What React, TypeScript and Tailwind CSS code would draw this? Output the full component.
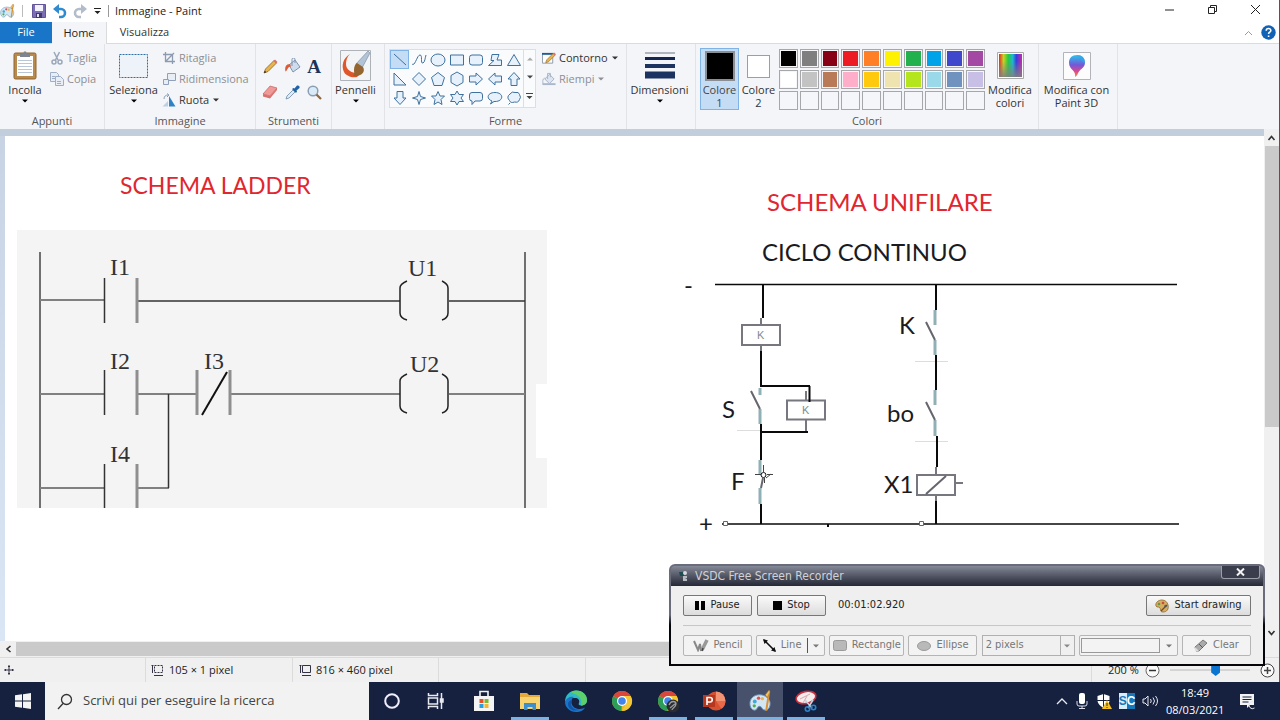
import type { ReactNode } from 'react';

const UI = "font-['Open_Sans','Noto_Sans',sans-serif]";

function Caret({ className = '' }: { className?: string }) {
  return (
    <svg width="6" height="4" viewBox="0 0 6 4" className={className} aria-hidden="true">
      <path d="M0 0.5h6L3 3.5z" fill="currentColor" />
    </svg>
  );
}

function PaletteIcon({ size }: { size: number }) {
  return (
    <svg width={size} height={size} viewBox="0 0 24 24" aria-hidden="true">
      <path d="M11 5C5 5 1 9 1 14c0 4 2 7 5 7 3 0 2-4 5-4s2 4 6 4c3 0 5-3 5-7 0-5-5-9-11-9z" fill="#d3e6f3" stroke="#6f9dbf" />
      <circle cx="6" cy="12" r="2" fill="#3fa9dd" />
      <circle cx="10" cy="8.500" r="1.800" fill="#e2504a" />
      <circle cx="5.500" cy="16.500" r="1.700" fill="#52ab52" />
      <circle cx="14" cy="9" r="1.700" fill="#f0b33c" />
      <path d="M20 1l2 1-1 7-2 13-2-1 2-13z" fill="#d99235" />
      <path d="M19 8l3-6-1-2-4 5z" fill="#f0c261" stroke="#a96a22" strokeWidth=".6" />
    </svg>
  );
}

/* ---------- title bar ---------- */

function TitleBar() {
  return (
    <header className="flex h-[22px] shrink-0 items-center bg-white text-[11px] text-[#222]">
      <div className="flex items-center gap-[7px]">
        <PaletteIcon size={15} />
        <span className="h-3 w-px bg-[#bbb]" />
      </div>
      <button aria-label="Salva" className="ml-[9px]">
        <svg width="14" height="14" viewBox="0 0 14 14">
          <path d="M.5.500h13v13H.500z" fill="#7d6db5" stroke="#63549a" />
          <path d="M3 1h8v6H3z" fill="#f3f1fa" />
          <path d="M4 9h6v5H4z" fill="#41386c" />
          <path d="M5 10h2v3H5z" fill="#e4e0f2" />
        </svg>
      </button>
      <button aria-label="Annulla" className="ml-[7px]">
        <svg width="14" height="15" viewBox="0 0 14 15">
          <path d="M2 5h6a4 4 0 010 8H6" fill="none" stroke="#2f8bd0" strokeWidth="2.600" />
          <path d="M0 5l6-5v10z" fill="#2f8bd0" />
        </svg>
      </button>
      <button aria-label="Ripeti" className="ml-[6px]">
        <svg width="14" height="15" viewBox="0 0 14 15">
          <path d="M12 5H6a4 4 0 000 8h2" fill="none" stroke="#b3bccb" strokeWidth="2.600" />
          <path d="M14 5L8 0v10z" fill="#b3bccb" />
        </svg>
      </button>
      <button aria-label="Personalizza barra" className="ml-[7px]">
        <svg width="7" height="7" viewBox="0 0 7 7">
          <path d="M0 0h7v1H0zM.500 3h6l-3 3z" fill="#222" />
        </svg>
      </button>
      <span className="ml-[7px] h-3 w-px bg-[#999]" />
      <h1 className="ml-[6px]">Immagine - Paint</h1>
      <div className="ml-auto flex items-center gap-8 pr-[18px] pb-[3px]">
        <button aria-label="Riduci a icona">
          <svg width="11" height="11" viewBox="0 0 11 11"><path d="M1 6h9" stroke="#222" /></svg>
        </button>
        <button aria-label="Ripristina">
          <svg width="11" height="11" viewBox="0 0 11 11">
            <path d="M1.500 3.500h6v6h-6zM3.500 3V1.500h6v6H8" fill="none" stroke="#222" />
          </svg>
        </button>
        <button aria-label="Chiudi">
          <svg width="11" height="11" viewBox="0 0 11 11"><path d="M1 1l9 9M10 1l-9 9" stroke="#222" /></svg>
        </button>
      </div>
    </header>
  );
}

function TabRow() {
  return (
    <nav className="flex h-[22px] shrink-0 items-stretch border-b border-[#dadbdc] bg-white text-[11px]">
      <button className="w-[52px] bg-[#1975c8] text-white">File</button>
      <button className="-mb-px w-[55px] border-r border-[#dadbdc] bg-[#f4f5f8] text-[#222]">Home</button>
      <button className="w-[75px] text-[#333]">Visualizza</button>
      <div className="ml-auto flex items-center gap-2 pr-[3px]">
        <svg width="9" height="6" viewBox="0 0 9 6"><path d="M1 5l3.500-3.500L8 5" fill="none" stroke="#999" /></svg>
        <button aria-label="Guida">
          <svg width="15" height="15" viewBox="0 0 15 15">
            <circle cx="7.500" cy="7.500" r="7.200" fill="#0f62b5" />
            <path d="M5.200 5.700c0-3 4.800-3 4.600 0-.1 1.500-2.200 1.600-2.200 3.200M7.600 10.500v1.600" fill="none" stroke="#fff" strokeWidth="1.600" />
          </svg>
        </button>
      </div>
    </nav>
  );
}

/* ---------- ribbon ---------- */

function Group({ label, className, children }: { label?: string; className: string; children: ReactNode }) {
  return (
    <section className={`flex shrink-0 flex-col border-r border-[#e2e3e7] pt-1 ${className}`}>
      <div className="flex min-h-0 flex-1 items-start">{children}</div>
      <h2 className="h-4 text-center leading-4 text-[#555]">{label}</h2>
    </section>
  );
}

function BigButton({ icon, label, className, caret }: { icon: ReactNode; label: ReactNode; className: string; caret?: boolean }) {
  return (
    <button className={`flex flex-col items-center text-[#333] ${className}`}>
      <span className="flex h-[35px] items-center justify-center">{icon}</span>
      <span className="leading-[13px]">{label}</span>
      {caret && <Caret className="mt-[3px] text-black" />}
    </button>
  );
}

function SmallButton({ icon, label, caret, muted }: { icon: ReactNode; label: string; caret?: boolean; muted?: boolean }) {
  return (
    <button className={`flex h-5 items-center gap-[3px] ${muted ? 'text-[#8d8f94]' : 'text-[#333]'}`}>
      <span className="flex w-[14px] justify-center">{icon}</span>
      <span className="whitespace-nowrap">{label}</span>
      {caret && <Caret className="ml-px" />}
    </button>
  );
}

const clipboard = (
  <svg width="24" height="29" viewBox="0 0 24 29">
    <rect x="1" y="2" width="22" height="26" rx="1.500" fill="#b98a4b" stroke="#8d6531" />
    <path d="M4 5h16v20H4z" fill="#fff" />
    <path d="M5 9.500h14M5 12.500h14M5 15.500h14M5 18.500h14M5 21.500h14" stroke="#b9c6d8" />
    <path d="M7 3h3l1-2.500h2L14 3h3v3H7z" fill="#7e8590" />
  </svg>
);
const scissors = (
  <svg width="12" height="14" viewBox="0 0 12 14" fill="none" stroke="#9aa7bb" strokeWidth="1.500">
    <path d="M3 1l4 8M8.500 1l-4 8" /><circle cx="3" cy="11" r="2" /><circle cx="9" cy="11" r="2" />
  </svg>
);
const copyIcon = (
  <svg width="14" height="14" viewBox="0 0 14 14" fill="#e9eef6" stroke="#9daec6">
    <path d="M.5.500h6l2 2v7h-8z" /><path d="M5.500 4.500h5l3 3v6h-8z" /><path d="M7 9.500h4M7 11.500h4M2 4.500h3M2 6.500h3" />
  </svg>
);
const selectIcon = (
  <svg width="29" height="24" viewBox="0 0 29 24">
    <rect x=".5" y=".5" width="28" height="23" fill="#eef3fa" stroke="#2c6ea8" strokeDasharray="2 1" />
  </svg>
);
const cropIcon = (
  <svg width="12" height="12" viewBox="0 0 12 12" fill="none" stroke="#8d9bb1" strokeWidth="1.300">
    <path d="M2.500 0v9.500H12M0 2.500h9.500V12M3 9l8-8" />
  </svg>
);
const resizeIcon = (
  <svg width="13" height="12" viewBox="0 0 13 12" fill="#e9eef6" stroke="#8fa0ba">
    <path d="M4.500.500h8v7h-8z" /><path d="M.500 6.500h5v5h-5z" />
  </svg>
);
const rotateIcon = (
  <svg width="14" height="14" viewBox="0 0 14 14">
    <path d="M7 3l6.500 10.500H7z" fill="#2d83c4" /><path d="M6 8v5.500H.500z" fill="#bcd0e4" /><path d="M2 6c0-3 2-4 4-4M5 .500L7 2 5 4" fill="none" stroke="#8aa0ba" />
  </svg>
);
const pencilIcon = (
  <svg width="15" height="15" viewBox="0 0 15 15">
    <path d="M1 14l1.500-4L11 1.500l2.500 2.500L5 12.500z" fill="#e8b54d" stroke="#8b6421" strokeWidth=".8" />
    <path d="M10.500 2L12 .500 14.500 3 13 4.500z" fill="#d9716e" /><path d="M1 14l.8-2.300 1.500 1.500z" fill="#222" />
  </svg>
);
const bucketIcon = (
  <svg width="17" height="16" viewBox="0 0 17 16">
    <path d="M5 7l6-5 5 7-7 5z" fill="#cfdced" stroke="#7d93ad" /><path d="M8 8V1.500a1.500 1.500 0 013 0V5" fill="none" stroke="#7d93ad" />
    <path d="M6 6C2 6 .500 9 1.500 13.500 4 12 3 9 7 8.500z" fill="#dc5a37" />
  </svg>
);
const eraserIcon = (
  <svg width="16" height="14" viewBox="0 0 16 14">
    <path d="M1 9l7-8 7 2-7 8z" fill="#ef9a98" stroke="#c9605f" strokeWidth=".7" /><path d="M1 9l7 2v2.500L1 11.500zM8 11l7-8v2l-7 8.500z" fill="#d8706e" />
  </svg>
);
const dropperIcon = (
  <svg width="15" height="15" viewBox="0 0 15 15">
    <path d="M1 14l1-3 6-6 2 2-6 6z" fill="#dcecf8" stroke="#6d8ba8" strokeWidth=".8" />
    <path d="M7 4l1.500-1 1 .500L12 .500c2-.5 3 1 2.500 2.500l-3 2.500.500 1L11 8z" fill="#1f62a7" />
  </svg>
);
const lensIcon = (
  <svg width="15" height="15" viewBox="0 0 15 15">
    <circle cx="6" cy="6" r="4.800" fill="#d9ebf8" stroke="#8b9db2" strokeWidth="1.500" /><path d="M9.500 9.500l4.500 4.500" stroke="#94663a" strokeWidth="2.200" />
  </svg>
);
const brushIcon = (
  <svg width="31" height="31" viewBox="0 0 31 31">
    <path d="M.500.500h30v30H.500z" fill="#f3f4f6" stroke="#aeb2b9" />
    <path d="M10 4C3 8 1 16 4 22c2 4 8 6 13 5l4-4C12 24 6 20 6 14c0-4 1-7 4-10z" fill="#e0562b" />
    <path d="M28 1l2 2-8 15-6-4z" fill="#b3c3d6" stroke="#72879f" strokeWidth=".6" />
    <path d="M17 13l6 4c3 5-2 10-10 9 2-2 1-3 1-6 0-3 1-6 3-7z" fill="#95652f" />
  </svg>
);
const outlineIcon = (
  <svg width="15" height="13" viewBox="0 0 15 13">
    <path d="M.500 1.500h11v10H.500z" fill="#fff" stroke="#8b97a6" /><path d="M0 1.500h12" stroke="#1f5c94" strokeWidth="2" />
    <path d="M4 11l1-3 7-7 2 2-7 7z" fill="#e8b54d" stroke="#96682a" strokeWidth=".7" /><path d="M11.500 1L13 0l2 2-1.500 1.500z" fill="#d9716e" />
  </svg>
);
const fillIcon = (
  <svg width="15" height="14" viewBox="0 0 15 14">
    <path d="M.500 12.500h14" stroke="#a9b6cb" strokeWidth="2" /><path d="M3 7l5-5 5 5-5 5z" fill="#dde4ef" stroke="#a3b1c8" /><path d="M6 7V1h3v4M3 6c-3 1-2 4-2 6" fill="none" stroke="#a3b1c8" />
  </svg>
);
const sizesIcon = (
  <svg width="30" height="27" viewBox="0 0 30 27">
    <path d="M0 1h30" stroke="#6c7484" /><path d="M0 6.500h30" stroke="#14284f" strokeWidth="3" />
    <path d="M0 14h30" stroke="#1d3461" strokeWidth="4" /><path d="M0 23h30" stroke="#1c3362" strokeWidth="7" />
  </svg>
);
const spectrumIcon = (
  <svg width="27" height="27" viewBox="0 0 27 27">
    <defs>
      <linearGradient id="hue">
        <stop offset="0" stopColor="#e02828" /><stop offset=".2" stopColor="#c9d420" /><stop offset=".4" stopColor="#24c943" />
        <stop offset=".6" stopColor="#20b5d4" /><stop offset=".75" stopColor="#3240dc" /><stop offset="1" stopColor="#d425a8" />
      </linearGradient>
      <linearGradient id="fade" x2="0" y2="1">
        <stop offset=".3" stopColor="#808080" stopOpacity="0" /><stop offset="1" stopColor="#808080" stopOpacity=".9" />
      </linearGradient>
    </defs>
    <path d="M.500.500h26v26H.500z" fill="#fff" stroke="#aaa" /><path d="M2 2h23v23H2z" fill="url(#hue)" /><path d="M2 2h23v23H2z" fill="url(#fade)" />
  </svg>
);
const paint3dIcon = (
  <svg width="28" height="28" viewBox="0 0 28 28">
    <defs>
      <linearGradient id="drop" x1="0" y1="0" x2="0" y2="1">
        <stop offset="0" stopColor="#28c5ec" /><stop offset=".45" stopColor="#7358d8" /><stop offset=".75" stopColor="#dd488d" /><stop offset="1" stopColor="#f09031" />
      </linearGradient>
    </defs>
    <path d="M.500.500h27v27H.500z" fill="#fcfcfd" stroke="#b2b4b9" />
    <path d="M14 3c5 0 8 3 8 7.500 0 5-4 6-6 9-1 1.500-2 4.500-4 5.500.500-3-.5-5-2-6.500C8 16.500 6 14.500 6 10.500 6 6 9 3 14 3z" fill="url(#drop)" />
    <path d="M14 3c5 0 8 3 8 7.500-2 1-4-4-8-7.500z" fill="#31a6ee" opacity=".7" />
  </svg>
);

const shapes: [string, string][] = [
  ['Linea', 'M2 2l12 11'],
  ['Curva', 'M1 12c3 3 5-9 8-9s0 9 3 8c2-1 2-5 3-8'],
  ['Ovale', 'M1 8a7 6 0 1014 0A7 6 0 101 8z'],
  ['Rettangolo', 'M1.500 3h13v10h-13z'],
  ['Rettangolo arrotondato', 'M4 3h8q2.500 0 2.500 2.500v5Q14.500 13 12 13H4q-2.500 0-2.500-2.500v-5Q1.500 3 4 3z'],
  ['Poligono', 'M5 2.500h7L10 8h4.500v5.500h-13L7 8.500H4z'],
  ['Triangolo', 'M8 2.500l6.500 11h-13z'],
  ['Triangolo rettangolo', 'M2 2v12h12z'],
  ['Rombo', 'M8 1.500L14.500 8 8 14.500 1.500 8z'],
  ['Pentagono', 'M8 1.500l6.500 5-2.500 8H4l-2.500-8z'],
  ['Esagono', 'M8 1l6 3.500v7L8 15l-6-3.500v-7z'],
  ['Freccia destra', 'M1.500 5H8V2l6.500 6L8 14v-3H1.500z'],
  ['Freccia sinistra', 'M14.500 5H8V2L1.500 8 8 14v-3h6.500z'],
  ['Freccia su', 'M5 14.500V8H2l6-6.500L14 8h-3v6.500z'],
  ['Freccia giù', 'M5 1.500V8H2l6 6.500L14 8h-3V1.500z'],
  ['Stella a quattro punte', 'M8 1.500L9.500 6.500 14.500 8 9.500 9.500 8 14.500 6.500 9.500 1.500 8 6.500 6.500z'],
  ['Stella a cinque punte', 'M8 1.500l2 4.500h4.500L11 9.500l1 5L8 12l-4 2.500 1-5L1.500 6H6z'],
  ['Stella a sei punte', 'M8 1l2 3.500h4.500L12 8l2.500 3.500H10L8 15l-2-3.500H1.500L4 8 1.500 4.500H6z'],
  ['Callout arrotondato', 'M4 2.500h8q2.500 0 2.500 2.500v3.500Q14.500 11 12 11H7l-3 3.500V11Q1.500 11 1.500 8.500V5Q1.500 2.500 4 2.500z'],
  ['Callout ovale', 'M5 11C-1 9 0 2.500 8 2.500c9 0 9 9 0 9H7L3.500 14z'],
  ['Callout nuvola', 'M4 4q2-3 5-1.500 4-1 4.500 2 2 3 0 5-1 3.500-5 2.500-4 1.500-5-1.500-3.500-3.500.500-6.500zM4 13l-1.500 1.500'],
];

function ShapesGallery() {
  return (
    <div className="mt-px ml-[4px] flex border border-[#dcdee3] bg-[#fafbfd]">
      <div className="grid grid-cols-[repeat(7,19px)] grid-rows-[repeat(3,19px)]">
        {shapes.map(([name, d], i) => (
          <button
            key={name}
            aria-label={name}
            className={`flex items-center justify-center ${i === 0 ? 'border border-[#7fb2e5] bg-[#c5dcf5]' : ''}`}
          >
            <svg width="16" height="16" viewBox="0 0 16 16" className="shrink-0">
              <path d={d} fill={i < 2 ? 'none' : '#e6f1fb'} stroke="#3f719f" />
            </svg>
          </button>
        ))}
      </div>
      <div className="flex w-[12px] flex-col items-center justify-around border-l border-[#dcdee3]">
        <Caret className="rotate-180 text-[#aaa]" />
        <Caret className="text-[#444]" />
        <svg width="7" height="7" viewBox="0 0 7 7"><path d="M0 0h7v1H0zM.500 3h6l-3 3z" fill="#444" /></svg>
      </div>
    </div>
  );
}

const swatches: (string | null)[] = [
  'bg-black', 'bg-[#7f7f7f]', 'bg-[#880015]', 'bg-[#ed1c24]', 'bg-[#ff7f27]', 'bg-[#fff200]', 'bg-[#22b14c]', 'bg-[#00a2e8]', 'bg-[#3f48cc]', 'bg-[#a349a4]',
  'bg-white', 'bg-[#c3c3c3]', 'bg-[#b97a57]', 'bg-[#ffaec9]', 'bg-[#ffc90e]', 'bg-[#efe4b0]', 'bg-[#b5e61d]', 'bg-[#99d9ea]', 'bg-[#7092be]', 'bg-[#c8bfe7]',
  null, null, null, null, null, null, null, null, null, null,
];

function Ribbon() {
  return (
    <div className="flex h-[85px] shrink-0 bg-[#f4f5f8] text-[11px]">
      <Group label="Appunti" className="w-[105px]">
        <BigButton icon={clipboard} label="Incolla" className="w-[50px]" caret />
        <div className="flex flex-col gap-px">
          <SmallButton icon={scissors} label="Taglia" muted />
          <SmallButton icon={copyIcon} label="Copia" muted />
        </div>
      </Group>
      <Group label="Immagine" className="w-[151px]">
        <BigButton icon={selectIcon} label="Seleziona" className="w-[57px]" caret />
        <div className="flex flex-col gap-px">
          <SmallButton icon={cropIcon} label="Ritaglia" muted />
          <SmallButton icon={resizeIcon} label="Ridimensiona" muted />
          <SmallButton icon={rotateIcon} label="Ruota" caret />
        </div>
      </Group>
      <Group label="Strumenti" className="w-[76px]">
        <div className="mt-[5px] ml-[3px] grid grid-cols-[repeat(3,22px)] grid-rows-[repeat(2,26px)]">
          <button aria-label="Matita" className="flex items-center justify-center">{pencilIcon}</button>
          <button aria-label="Riempimento" className="flex items-center justify-center">{bucketIcon}</button>
          <button aria-label="Testo" className="flex items-center justify-center font-['Liberation_Serif',serif] text-[19px] leading-[19px] font-bold text-[#1c3358]">A</button>
          <button aria-label="Gomma" className="flex items-center justify-center">{eraserIcon}</button>
          <button aria-label="Selezione colore" className="flex items-center justify-center">{dropperIcon}</button>
          <button aria-label="Lente" className="flex items-center justify-center">{lensIcon}</button>
        </div>
      </Group>
      <Group className="w-[53px]">
        <BigButton icon={brushIcon} label="Pennelli" className="w-[47px]" caret />
      </Group>
      <Group label="Forme" className="w-[242px]">
        <ShapesGallery />
        <div className="ml-[6px] flex flex-col gap-px">
          <SmallButton icon={outlineIcon} label="Contorno" caret />
          <SmallButton icon={fillIcon} label="Riempi" caret muted />
        </div>
      </Group>
      <Group className="w-[69px]">
        <BigButton icon={sizesIcon} label="Dimensioni" className="w-[65px]" caret />
      </Group>
      <Group label="Colori" className="w-[343px]">
        <button className="ml-1 flex h-[62px] w-[39px] flex-col items-center border border-[#7fb2e5] bg-[#c5dcf5] text-[#444]">
          <span className="flex h-[34px] shrink-0 items-center"><span className="size-[30px] border-2 border-[#8a8f96] bg-black" /></span>
          <span className="leading-[13px]">Colore<br />1</span>
        </button>
        <button className="flex h-[62px] w-[39px] flex-col items-center border border-transparent text-[#333]">
          <span className="flex h-[34px] shrink-0 items-center"><span className="size-[23px] border border-[#9a9ea5] bg-white" /></span>
          <span className="leading-[13px]">Colore<br />2</span>
        </button>
        <div className="mt-px ml-px grid w-[206px] grid-cols-10 gap-[2px]">
          {swatches.map((c, i) => (
            <button
              key={i}
              aria-label={`Colore ${i + 1}`}
              className={`h-[19px] border border-[#a5a7ab] ${c ? `${c} shadow-[inset_0_0_0_1px_#f6f6f8]` : 'bg-[#f5f6f9]'}`}
            />
          ))}
        </div>
        <BigButton icon={spectrumIcon} label={<>Modifica<br />colori</>} className="w-[50px]" />
      </Group>
      <Group className="w-[79px]">
        <BigButton icon={paint3dIcon} label={<>Modifica con<br />Paint 3D</>} className="w-[75px] whitespace-nowrap" />
      </Group>
    </div>
  );
}

/* ---------- drawing ---------- */

function Drawing() {
  return (
    <svg width="1258" height="505" viewBox="5 136 1258 505" className="block shrink-0" role="img" aria-label="Schema ladder e schema unifilare">
      <path d="M17 230h530v154h-11v74h11v50H17z" fill="#f4f4f4" />
      <g className="font-['Lato',sans-serif]" fill="#e0262f">
        <text x="120" y="194" className="text-[23px]">SCHEMA LADDER</text>
        <text x="767" y="211" className="text-[24px]">SCHEMA UNIFILARE</text>
      </g>

      <g fill="none" stroke="#555" strokeWidth="2">
        <path d="M40 252v256M525 252v256" stroke="#707070" />
        <path d="M40 300h64M40 394h64M40 488h64M138 394h58M230 394h170M449 394h76M138 488h31" stroke="#808080" />
        <path d="M136 301h264M449 301h76" stroke="#333" strokeWidth="1.500" />
        <path d="M104.500 278v45M104.500 370v45M104.500 464v44M168.500 394v94" stroke="#333" strokeWidth="1.500" />
        <path d="M137 278v45M137 370v45M137 464v44M197 370v45M230 370v45" stroke="#8f8f8f" strokeWidth="3" />
        <path d="M202 415l25-43" stroke="#111" />
        <path d="M407 281q-7 3-7 7v25q0 5 7 7M442 281q6 3 6 7v25q0 5-6 7M407 374q-7 3-7 7v25q0 5 7 7M442 374q6 3 6 7v25q0 5-6 7" stroke="#222" strokeWidth="1.500" />
      </g>
      <g className="font-['Liberation_Serif',serif] text-[24px]" fill="#333">
        <text x="110" y="275">I1</text>
        <text x="110" y="369">I2</text>
        <text x="204" y="369">I3</text>
        <text x="110" y="462">I4</text>
        <text x="408" y="276">U1</text>
        <text x="410" y="372">U2</text>
      </g>

      <g className="font-['Lato',sans-serif] text-[24px]" fill="#1b1b1f">
        <text x="762" y="261">CICLO CONTINUO</text>
        <text x="899" y="334">K</text>
        <text x="722" y="418">S</text>
        <text x="731" y="490">F</text>
        <text x="887" y="422">bo</text>
        <text x="884" y="493">X1</text>
        <text x="699" y="532">+</text>
        <text x="684" y="294">-</text>
      </g>
      <path d="M737 430.500h23M915 361.500h33M915 441.500h33" stroke="#ddd" />
      <g fill="none" stroke="#8fb0b5" strokeWidth="3">
        <path d="M760 388v7M760 409v15M760 460v14M760 488v16M935 310v15M935 340v15M935 390v15M935 420v16" />
      </g>
      <g fill="none" stroke="#77777f" strokeWidth="2">
        <path d="M742 325h38v20h-38zM787 400.500h38v19h-38zM917 475h38v20h-38z" />
        <path d="M761 318v7M761 345v6M806 391v9M806 420v11M936 467v8M936 495v6M955 483h8" />
        <path d="M751 391l9 18M926 322l9 18M926 402l9 18M926 494l20-18M763 478l-2 10" stroke="#66666e" />
      </g>
      <g fill="none" stroke="#0a0a0a" strokeWidth="2">
        <path d="M715 284.500h462M722 524h457" strokeWidth="1.500" />
        <path d="M763 285v33M761 351v36M761 386h49M809.500 386v16M761 424v36M761 432h47M761 504v20M936 285v25M936 355v35M937 436v31M936 501v23M828 524v3" />
      </g>
      <g className="font-['Liberation_Sans',sans-serif] text-[11px]" fill="#88888e">
        <text x="757" y="339">K</text>
        <text x="802" y="414">K</text>
      </g>
      <path d="M723.500 521.500h4v4h-4zM919.500 521.500h4v4h-4z" fill="#fff" stroke="#666" />
      <g fill="none" stroke="#444">
        <path d="M755 474.500h6M767 474.500h6M763.500 465v7M764.500 478v5M766 478l5-4" /><circle cx="763.500" cy="475" r="2.500" fill="#fff" stroke="#111" />
      </g>
    </svg>
  );
}

function Chevron({ className = '' }: { className?: string }) {
  return (
    <svg width="9" height="6" viewBox="0 0 9 6" className={className} aria-hidden="true">
      <path d="M1.500 5l3-3.500 3 3.500" fill="none" stroke="#333" strokeWidth="1.600" />
    </svg>
  );
}

function Workspace() {
  return (
    <main className="flex min-h-0 flex-1">
      <div className="flex min-w-0 flex-1 flex-col">
        <div className="h-[7px] shrink-0 bg-[#c2cedb]" />
        <div className="flex min-h-0 flex-1 overflow-hidden bg-white">
          <div className="w-[5px] shrink-0 bg-gradient-to-b from-[#c8d4e4] to-[#dbe6f4]" />
          <Drawing />
        </div>
        <div className="flex h-4 shrink-0 items-center bg-[#f0f0f0]">
          <button aria-label="Scorri a sinistra" className="flex w-4 justify-center"><Chevron className="-rotate-90" /></button>
          <div className="h-[14px] w-[1170px] bg-[#cacaca]" />
        </div>
      </div>
      <div className="flex w-[15px] shrink-0 flex-col items-center bg-[#f0f0f0]">
        <button aria-label="Scorri in alto" className="flex h-[17px] items-center"><Chevron /></button>
        <div className="h-[281px] w-[14px] bg-[#cacaca]" />
        <button aria-label="Scorri in basso" className="mt-auto mb-4 flex h-4 items-center"><Chevron className="rotate-180" /></button>
      </div>
    </main>
  );
}

function StatusBar() {
  return (
    <footer className="flex h-[25px] shrink-0 items-stretch border-t border-[#dcdcdc] bg-[#f0f0f0] text-[11px] text-[#222]">
      <div className="flex w-[146px] items-center border-r border-[#dcdcdc] pl-1">
        <svg width="10" height="10" viewBox="0 0 10 10" stroke="#334" fill="none"><path d="M5 0v10M0 5h10M4 1.500h2M4 8.500h2M1.500 4v2M8.500 4v2" /></svg>
      </div>
      <div className="flex w-[147px] items-center gap-[6px] border-r border-[#dcdcdc] pl-[5px]">
        <svg width="12" height="13" viewBox="0 0 12 13" fill="none" stroke="#334">
          <path d="M3.500 1.500h8v7h-8z" strokeDasharray="2 1" /><path d="M1.500 1v8M.500 2l1-1 1 1M3 11.500h9" />
        </svg>
        105 × 1 pixel
      </div>
      <div className="flex w-[146px] items-center gap-[5px] border-r border-[#dcdcdc] pl-[6px]">
        <svg width="12" height="13" viewBox="0 0 12 13" fill="none" stroke="#334">
          <path d="M3.500 1.500h8v7h-8z" /><path d="M1.500 1v8M.500 2l1-1 1 1M3 11.500h9" />
        </svg>
        816 × 460 pixel
      </div>
      <div className="w-[147px] border-r border-[#dcdcdc]" />
      <div className="ml-auto flex items-center border-l border-[#dcdcdc] pr-[4px] pl-[16px]">
        <span className="w-9 whitespace-nowrap">200 %</span>
        <button aria-label="Riduci zoom" className="ml-px">
          <svg width="15" height="15" viewBox="0 0 15 15" fill="#fafafa" stroke="#666"><circle cx="7.500" cy="7.500" r="6.500" /><path d="M4 7.500h7" stroke="#333" strokeWidth="1.500" /></svg>
        </button>
        <input
          type="range"
          aria-label="Zoom"
          defaultValue={58}
          className="mx-[10px] h-4 w-20 appearance-none bg-[linear-gradient(#d4d4d4,#d4d4d4)] bg-[length:100%_2px] bg-center bg-no-repeat [&::-webkit-slider-thumb]:h-3 [&::-webkit-slider-thumb]:w-[9px] [&::-webkit-slider-thumb]:appearance-none [&::-webkit-slider-thumb]:bg-[#0b74d1] [&::-webkit-slider-thumb]:[clip-path:polygon(0_0,100%_0,100%_70%,50%_100%,0_70%)]"
        />
        <button aria-label="Aumenta zoom">
          <svg width="15" height="15" viewBox="0 0 15 15" fill="#fafafa" stroke="#444"><circle cx="7.500" cy="7.500" r="6.500" /><path d="M4 7.500h7M7.500 4v7" strokeWidth="1.500" /></svg>
        </button>
      </div>
    </footer>
  );
}

/* ---------- recorder window ---------- */

function RecButton({ icon, label, className, dim }: { icon: ReactNode; label: string; className: string; dim?: boolean }) {
  return (
    <button
      className={`flex h-[21px] shrink-0 items-center justify-center gap-[5px] whitespace-nowrap rounded-[2px] border ${
        dim ? 'border-[#b5b5b5] bg-[#f3f3f3] text-[#777]' : 'border-[#777] bg-gradient-to-b from-[#fafafa] to-[#dcdcdc] text-[#222]'
      } ${className}`}
    >
      {icon}
      {label}
    </button>
  );
}

function Recorder() {
  return (
    <aside
      aria-label="VSDC Free Screen Recorder"
      className="absolute right-[15px] bottom-[54px] w-[596px] rounded-t-[6px] bg-gradient-to-b from-[#6a6c7c] from-50% to-[#05060c] to-60% p-[2px] font-['DejaVu_Sans_Condensed','DejaVu_Sans',sans-serif] text-[11px]"
    >
      <div className="flex h-[20px] items-center rounded-t-[4px] bg-gradient-to-b from-[#858a98] via-[#535765] to-[#252835] pl-[8px] text-[12px] text-[#d0d2d8]">
        <svg width="10" height="12" viewBox="0 0 10 12" aria-hidden="true">
          <path d="M0 2h5v4H1z" fill="#1d4b52" /><circle cx="6" cy="3" r="2" fill="#d6dade" /><path d="M4 6h4v2H6l2 1v2H4z" fill="#b5bcc2" />
        </svg>
        <h2 className="ml-[6px]">VSDC Free Screen Recorder</h2>
        <button aria-label="Chiudi registratore" className="mr-[3px] mb-auto ml-auto flex h-[13px] w-[39px] items-center justify-center rounded-b-[3px] border border-t-0 border-[#9a9daa] bg-[#3a3d4c]">
          <svg width="9" height="8" viewBox="0 0 9 8"><path d="M1 0.500l7 7M8 0.500l-7 7" stroke="#f2f2f2" strokeWidth="2" /></svg>
        </button>
      </div>
      <div className="bg-[#efefef] px-[12px] pt-[9px] pb-[8px]">
        <div className="flex items-center gap-[5px]">
          <RecButton className="w-[69px]" label="Pause" icon={<svg width="10" height="9" viewBox="0 0 10 9"><path d="M0 0h4v9H0zM6 0h4v9H6z" /></svg>} />
          <RecButton className="w-[69px]" label="Stop" icon={<svg width="9" height="9" viewBox="0 0 9 9"><path d="M0 0h9v9H0z" /></svg>} />
          <time className="ml-[7px] text-[#222]">00:01:02.920</time>
          <RecButton
            className="ml-auto w-[105px]"
            label="Start drawing"
            icon={
              <svg width="14" height="14" viewBox="0 0 14 14">
                <path d="M7 1C3 1 0 4 1 7c1 2 3 0 4 2s0 4 3 4c4 0 6-3 5-7-.500-3-3-5-6-5z" fill="#d7ad60" stroke="#8d6a2c" strokeWidth=".8" />
                <circle cx="4" cy="5" r="1.300" fill="#5d9a49" /><circle cx="8" cy="4" r="1.300" fill="#c74c3f" /><circle cx="10.500" cy="7" r="1.300" fill="#4568ad" /><path d="M6 12l6-6" stroke="#6d4d21" strokeWidth="1.300" />
              </svg>
            }
          />
        </div>
        <div className="my-[9px] h-px bg-[#c6c6c6]" />
        <div className="flex items-center justify-between">
          <RecButton
            dim
            className="w-[69px]"
            label="Pencil"
            icon={<svg width="16" height="13" viewBox="0 0 16 13" fill="none"><path d="M1 2l4 9 2-6 1 7" stroke="#888" strokeWidth="2" /><path d="M9 11L14 1" stroke="#999" strokeWidth="3.500" /><path d="M9 12l1-3" stroke="#444" strokeWidth="1.500" /></svg>}
          />
          <div className="flex h-[21px] w-[69px] shrink-0 items-center rounded-[2px] border border-[#b5b5b5] bg-[#f3f3f3] text-[#777]">
            <button className="flex flex-1 items-center justify-center gap-[5px]">
              <svg width="13" height="13" viewBox="0 0 13 13"><path d="M1 1l11 11" stroke="#111" strokeWidth="1.600" /><path d="M0 0l5 1.500L1.500 5zM13 13l-5-1.500L11.500 8z" fill="#111" /></svg>
              Line
            </button>
            <button aria-label="Stile linea" className="flex h-[15px] w-[17px] items-center justify-center border-l border-[#555]"><Caret className="text-[#777]" /></button>
          </div>
          <RecButton dim className="w-[75px]" label="Rectangle" icon={<svg width="14" height="11" viewBox="0 0 14 11"><rect x=".5" y=".5" width="13" height="10" rx="2" fill="#b9b9b9" stroke="#9a9a9a" /></svg>} />
          <RecButton dim className="w-[69px]" label="Ellipse" icon={<svg width="14" height="10" viewBox="0 0 14 10"><ellipse cx="7" cy="5" rx="6.500" ry="4.500" fill="#b9b9b9" stroke="#9a9a9a" /></svg>} />
          <div className="relative h-[21px] w-[93px] shrink-0">
            <select aria-label="Spessore linea" className="h-full w-full appearance-none border border-[#b0b0b0] bg-[#f0f0f0] pl-[3px] text-[#777]">
              <option>2 pixels</option>
            </select>
            <span className="pointer-events-none absolute inset-y-px right-px flex w-[14px] items-center justify-center border-l border-[#b0b0b0]"><Caret className="text-[#888]" /></span>
          </div>
          <button aria-label="Colore linea" className="flex h-[21px] w-[99px] shrink-0 items-center justify-between rounded-[2px] border border-[#b5b5b5] bg-[#f3f3f3] p-px pr-[5px]">
            <span className="h-[15px] w-[79px] border border-[#999]" />
            <Caret className="text-[#777]" />
          </button>
          <RecButton dim className="w-[69px]" label="Clear" icon={<svg width="14" height="13" viewBox="0 0 14 13"><path d="M1 8l8-7 4 3-8 8H2z" fill="#aaa" stroke="#666" strokeWidth=".8" /><path d="M1 8l4 4H1z" fill="#ddd" /><path d="M5 5l4 4" stroke="#555" /></svg>} />
        </div>
      </div>
    </aside>
  );
}

/* ---------- taskbar ---------- */

const chromeArt = (
  <>
    <circle cx="12" cy="12" r="10" fill="#e4b92a" />
    <path d="M12 12L3.300 7A10 10 0 0120.700 7z" fill="#d9463c" /><path d="M12 12l-.500 10A10 10 0 013.300 7z" fill="#2d9e57" />
    <path d="M12 7h8.700A10 10 0 0112 22l4.300-7.500z" fill="#f3c634" />
    <circle cx="12" cy="12" r="5" fill="#fff" /><circle cx="12" cy="12" r="3.800" fill="#4384ea" />
  </>
);

const apps: { name: string; art: ReactNode; open?: boolean; active?: boolean }[] = [
  { name: 'Cortana', art: <circle cx="12" cy="12" r="6.800" fill="none" stroke="#eef" strokeWidth="2" /> },
  {
    name: 'Visualizzazione attività',
    art: <path d="M2.500 4v2.500h9V4M2.500 20v-2.500h9V20M2.500 9h9v6h-9zM15.500 4v16M14.500 10h2.500v3h-2.500z" fill="none" stroke="#e8eaf0" strokeWidth="1.500" />,
  },
  {
    name: 'Microsoft Store',
    art: (
      <>
        <path d="M8 8V2.500h8V8" fill="none" stroke="#f4f4f4" strokeWidth="1.600" /><path d="M2 7h20v15H2z" fill="#f4f4f4" />
        <path d="M7.500 10h4v4h-4z" fill="#e5532a" /><path d="M12.500 10h4v4h-4z" fill="#7fb82e" /><path d="M7.500 15h4v4h-4z" fill="#2a9fe0" /><path d="M12.500 15h4v4h-4z" fill="#f7b72a" />
      </>
    ),
  },
  {
    name: 'Esplora file',
    open: true,
    art: (
      <>
        <path d="M2 4h7l2 2h11v14H2z" fill="#e5aa38" /><path d="M2 8h20v12H2z" fill="#f8d372" /><path d="M6 21v-7h12v7h-3.500v-3h-5v3z" fill="#3d8ecb" />
      </>
    ),
  },
  {
    name: 'Microsoft Edge',
    art: (
      <>
        <path d="M1 13C1 6 6 1.500 12 1.500c7 0 11 5 11 9.500 0 4-3 5.500-6 5.500-2 0-3-1-2-2.500 1-3-1-5-4-5-5 0-9 2-10 4z" fill="#32b9c8" />
        <path d="M12 1.500c7 0 11 5 11 9.500 0 4-3 5.500-6 5.500 2-6-2-11-10-13 1.500-1.300 3-2 5-2z" fill="#5dd06b" />
        <path d="M1 13c1-4 5-6 9-5-4 2-4 12 6 12 2 0 4-.8 5-1.500-2 3.500-5 4.500-9 4.500C6 23 1 18.500 1 13z" fill="#1975cc" />
        <path d="M8 11c-3 5 1 11 8 9.500C11 23 4 21 4 15c0-2 2-4 4-4z" fill="#1354a5" />
      </>
    ),
  },
  { name: 'Google Chrome', art: chromeArt },
  {
    name: 'Google Chrome (profilo)',
    open: true,
    art: (
      <>
        {chromeArt}
        <circle cx="17" cy="17" r="6.500" fill="#2a2c30" /><path d="M13 16c2-5 7-4 7-1s-4 4-4 6M14 19l6-5" fill="none" stroke="#979b9e" strokeWidth="1.300" />
      </>
    ),
  },
  {
    name: 'PowerPoint',
    open: true,
    art: (
      <>
        <circle cx="14" cy="12" r="9.500" fill="#d8512f" /><path d="M14 2.500a9.500 9.500 0 019.500 9.500H14z" fill="#f29473" /><path d="M14 12h9.500a9.500 9.500 0 01-4 7.700z" fill="#e9694a" />
        <path d="M1 6h12v12H1z" fill="#b7371e" /><path d="M5 16V8.500h3a2.200 2.200 0 010 4.500H5" fill="none" stroke="#fff" strokeWidth="1.600" />
      </>
    ),
  },
  { name: 'Paint', open: true, active: true, art: null },
  {
    name: 'Strumento di cattura',
    open: true,
    art: (
      <>
        <ellipse cx="12" cy="8.500" rx="10" ry="6" fill="#f5ecec" stroke="#cc2f3c" strokeWidth="1.600" transform="rotate(-12 12 8.500)" /><path d="M6 10l10-5M9 14l4-7" stroke="#d8a8ac" />
        <path d="M11 11l7 8M19 11l-5 8" stroke="#c4d3e0" strokeWidth="1.500" />
        <circle cx="13.500" cy="20" r="2.200" fill="none" stroke="#2b83cb" strokeWidth="1.600" /><circle cx="19.500" cy="18.500" r="2.200" fill="none" stroke="#2b83cb" strokeWidth="1.600" />
      </>
    ),
  },
];

function Taskbar() {
  return (
    <nav aria-label="Barra delle applicazioni" className="flex h-[38px] shrink-0 items-stretch bg-[#16213f] text-white">
      <button aria-label="Start" className="flex w-[45px] items-center justify-center">
        <svg width="16" height="16" viewBox="0 0 16 16" fill="#f4f4f4"><path d="M0 2.300l7-1v6.200H0zM8 1.200L16 0v7.500H8zM0 8.500h7v6.200l-7-1zM8 8.500h8V16l-8-1.200z" /></svg>
      </button>
      <label className="flex w-[324px] items-center gap-[10px] bg-[#f2f2f2] pl-[12px]">
        <svg width="16" height="17" viewBox="0 0 16 17" fill="none" stroke="#333" strokeWidth="1.300"><circle cx="9.500" cy="6.500" r="5" /><path d="M6 10.500l-5 5.500" /></svg>
        <input
          type="text"
          aria-label="Cerca"
          placeholder="Scrivi qui per eseguire la ricerca"
          className="min-w-0 flex-1 bg-transparent text-[13px] outline-none placeholder:text-[#444]"
        />
      </label>
      {apps.map((app) => (
        <button key={app.name} aria-label={app.name} className={`relative flex w-[46px] shrink-0 items-center justify-center ${app.active ? 'bg-[#47516b]' : ''}`}>
          {app.art ? <svg width="24" height="24" viewBox="0 0 24 24">{app.art}</svg> : <PaletteIcon size={23} />}
          {app.open && <span className={`absolute bottom-0 h-[3px] bg-[#76b4e6] ${app.active ? 'inset-x-0' : 'inset-x-1'}`} />}
        </button>
      ))}
      <div className="ml-auto flex items-center gap-[7px] pr-[24px]">
        <svg width="12" height="8" viewBox="0 0 12 8"><path d="M1 7l5-5 5 5" fill="none" stroke="#e8eaf0" strokeWidth="1.300" /></svg>
        <svg width="14" height="16" viewBox="0 0 14 16"><rect x="4" y="0" width="6" height="11" rx="2" fill="#fff" /><path d="M2 8v3q0 2 2 2h6q2 0 2-2V8M7 13v2.500M4 15.500h6" fill="none" stroke="#dde" /></svg>
        <svg width="16" height="16" viewBox="0 0 16 16"><path d="M7.500 1l6 2v4c0 4-3 6-6 8-3-2-6-4-6-8V3z" fill="#fff" /><path d="M7.500 1v14M1 7.500h13" stroke="#16213f" /><path d="M11 7l5 9H6z" fill="#f4bd22" /><path d="M11 10v3M11 14v1" stroke="#333" /></svg>
        <span className="flex h-4 w-4 items-center justify-center bg-[#d9edfa] font-['Liberation_Sans',sans-serif] text-[12px] leading-4 font-bold">
          <b className="text-[#1678ba]">S</b><b className="bg-[#1678ba] text-white">C</b>
        </span>
        <svg width="17" height="14" viewBox="0 0 17 14" fill="none" stroke="#e8eaf0"><path d="M1 5h2l3-3v10L3 9H1zM8.500 5q1.500 2 0 4M11 3.500q3 3.500 0 7M13.500 2q4 5 0 10" /></svg>
        <time className="w-[58px] text-center text-[11px] leading-[17px]">18:49<br />08/03/2021</time>
        <button aria-label="Notifiche" className="ml-[8px]">
          <svg width="17" height="17" viewBox="0 0 17 17"><path d="M1 1h14v11h-4l-3 3v-3H1z" fill="#f4f4f4" /><path d="M3.500 4h9M3.500 6.500h9M3.500 9h6" stroke="#16213f" /><path d="M15 9a3.500 3.500 0 10.500 6" fill="none" stroke="#e8e8ee" /></svg>
        </button>
      </div>
    </nav>
  );
}

export default function App() {
  return (
    <div className={`relative flex h-screen flex-col overflow-hidden bg-white ${UI}`}>
      <div className="flex min-h-0 flex-1 flex-col border-r border-[#555]">
        <TitleBar />
        <TabRow />
        <Ribbon />
        <Workspace />
        <StatusBar />
      </div>
      <Taskbar />
      <Recorder />
    </div>
  );
}
